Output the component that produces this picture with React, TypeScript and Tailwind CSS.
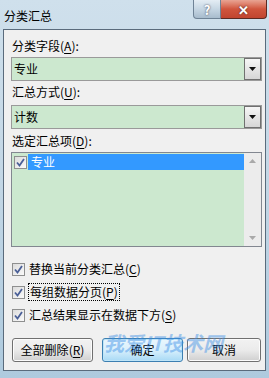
import React from "react";

const FONT = { fontFamily: '"Noto Sans CJK SC", "Noto Sans", sans-serif' };

function Key({ k }: { k: string }) {
	return (
		<>
			(<span className="underline underline-offset-2">{k}</span>)
		</>
	);
}

function Check() {
	return (
		<span className="flex h-[13px] w-[13px] shrink-0 items-center justify-center border border-[#8e8f8f] bg-gradient-to-br from-[#dcdcdc] to-[#fafafa]">
			<svg width="9" height="9" viewBox="0 0 9 9">
				<path
					d="M1 4.5 L3.5 7.5 L8 1"
					fill="none"
					stroke="#4a5f97"
					strokeWidth="1.8"
				/>
			</svg>
		</span>
	);
}

function Combo({ value }: { value: string }) {
	return (
		<div className="flex h-[24px] items-stretch border border-[#9a9a9a] bg-[#cce8cf]">
			<div className="flex flex-1 items-center pl-[2px] text-[12px] leading-none text-black">
				{value}
			</div>
			<div className="flex w-[17px] items-center justify-center border border-[#707070] bg-gradient-to-b from-[#f6f6f6] to-[#d6d6d6]">
				<svg width="7" height="4" viewBox="0 0 7 4">
					<path d="M0 0 H7 L3.5 4 Z" fill="#111" />
				</svg>
			</div>
		</div>
	);
}

function Btn({
	children,
	primary,
	className,
}: {
	children: React.ReactNode;
	primary?: boolean;
	className?: string;
}) {
	return (
		<div
			className={`flex h-[24px] items-center justify-center rounded-[3px] border text-[12px] leading-none text-black ${
				primary
					? "border-[#3c7fb1] bg-gradient-to-b from-[#eaf6fd] via-[#d9f0fc] to-[#a7d9f5] shadow-[inset_0_0_0_1px_#bfe5f8]"
					: "border-[#707070] bg-gradient-to-b from-[#f2f2f2] via-[#ebebeb] to-[#cfcfcf] shadow-[inset_0_0_0_1px_#fcfcfc]"
			} ${className ?? ""}`}
		>
			{children}
		</div>
	);
}

export default function App() {
	return (
		<div
			className="relative h-[378px] w-[269px] overflow-hidden bg-gradient-to-b from-[#cfe0ec] via-[#c2d6e5] to-[#aecade]"
			style={FONT}
		>
			{/* title bar */}
			<div className="flex h-[29px] items-start">
				<div className="flex-1 pl-[4px] pt-[8px] text-[12px] leading-[16px] text-black">
					分类汇总
				</div>
				<div className="flex h-[19px] pr-[2px]">
					<div className="flex w-[28px] items-center justify-center rounded-bl-[4px] border border-t-0 border-[#6f8396] bg-gradient-to-b from-[#e4edf4] via-[#c6d6e3] to-[#a8bccd] text-[13px] font-bold leading-none text-white [text-shadow:0_0_2px_#334]">
						?
					</div>
					<div className="flex w-[46px] items-center justify-center rounded-br-[4px] border border-l-0 border-t-0 border-[#5c2a22] bg-gradient-to-b from-[#e8a493] via-[#d0553d] to-[#c1452f] text-[13px] font-bold leading-none text-white [text-shadow:0_0_2px_#322]">
						✕
					</div>
				</div>
			</div>

			{/* client area */}
			<div className="mx-[3px] flex h-[342px] flex-col border border-[#5a6b7c] bg-[#f0f0f0] pl-[7px] pr-[3px]">
				<div className="mt-[8px] h-[16px] pl-[1px] text-[12px] leading-[16px] text-black">
					分类字段<Key k="A" />:
				</div>
				<div className="mt-[3px]">
					<Combo value="专业" />
				</div>
				<div className="mt-[3px] h-[16px] pl-[1px] text-[12px] leading-[16px] text-black">
					汇总方式<Key k="U" />:
				</div>
				<div className="mt-[5px]">
					<Combo value="计数" />
				</div>
				<div className="mt-[4px] h-[16px] pl-[1px] text-[12px] leading-[16px] text-black">
					选定汇总项<Key k="D" />:
				</div>
				<div className="mt-[3px] flex h-[95px] border border-[#828790] bg-[#cce8cf]">
					<div className="flex-1 pl-[2px] pt-[1px]">
						<div className="flex h-[16px] items-center">
							<Check />
							<div className="ml-[1px] flex h-[16px] flex-1 items-center bg-[#3399ff] pl-[3px] text-[12px] leading-none text-white">
								专业
							</div>
						</div>
					</div>
					<div className="flex w-[17px] flex-col items-center justify-between bg-[#ececec] py-[6px]">
						<svg width="7" height="4" viewBox="0 0 7 4">
							<path d="M0 4 H7 L3.5 0 Z" fill="#a9a9a9" />
						</svg>
						<svg width="7" height="4" viewBox="0 0 7 4">
							<path d="M0 0 H7 L3.5 4 Z" fill="#a9a9a9" />
						</svg>
					</div>
				</div>

				<div className="mt-[14px] flex h-[16px] items-center pl-[1px] text-[12px] leading-none text-black">
					<Check />
					<span className="ml-[4px]">
						替换当前分类汇总<Key k="C" />
					</span>
				</div>
				<div className="mt-[7px] flex h-[16px] items-center pl-[1px] text-[12px] leading-none text-black">
					<Check />
					<span className="ml-[3px] border border-dotted border-black px-[1px] py-[2px]">
						每组数据分页<Key k="P" />
					</span>
				</div>
				<div className="mt-[7px] flex h-[16px] items-center pl-[1px] text-[12px] leading-none text-black">
					<Check />
					<span className="ml-[4px]">
						汇总结果显示在数据下方<Key k="S" />
					</span>
				</div>

				<div className="mt-[15px] flex pl-[1px]">
					<Btn className="w-[81px]">
						全部删除<Key k="R" />
					</Btn>
					<Btn primary className="ml-[9px] w-[81px]">
						确定
					</Btn>
					<Btn className="ml-[4px] w-[74px]">取消</Btn>
				</div>
			</div>

			{/* watermark */}
			<div className="pointer-events-none absolute left-[104px] top-[331px] text-[20px] font-bold italic leading-[24px] text-[#3a8ee6] opacity-45">
				我爱IT技术网
			</div>
		</div>
	);
}
